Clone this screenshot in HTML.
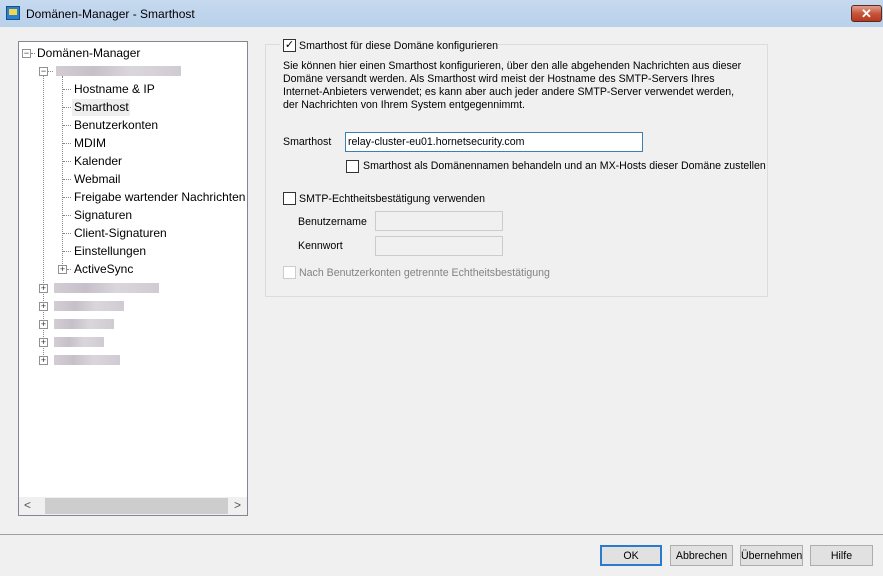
<!DOCTYPE html>
<html><head><meta charset="utf-8"><style>
*{margin:0;padding:0;box-sizing:border-box}
body{width:883px;height:576px;background:#f0f0f0;font-family:"Liberation Sans",sans-serif;font-size:10.6px;color:#000;position:relative;overflow:hidden}
.a{position:absolute;white-space:nowrap}
.title{left:0;top:0;width:883px;height:27px;background:linear-gradient(#c6d9ef,#b9d1ea);}
.close{left:851px;top:5px;width:31px;height:17px;background:linear-gradient(#e0a090,#c8553b 50%,#b6381f);border:1px solid #5a2a20;border-radius:3px;color:#fff;font-weight:bold;font-size:13px;text-align:center;line-height:15px}
.tree{left:18px;top:41px;width:230px;height:475px;background:#fff;border:1px solid #828790}
.ti{font-size:12px}
.blur{height:10px;background:linear-gradient(90deg,#c8c0c8,#b8b0bc 30%,#d0ccd2 60%,#c4bec8);opacity:.8}
.pm{width:9px;height:9px;border:1px solid #919191;background:#fff;font-size:9px;line-height:7px;text-align:center;color:#333}
.dot{border-left:1px dotted #888}
.doth{border-top:1px dotted #888;height:0}
.cb{width:13px;height:13px;border:1px solid #333;background:#fff}
.inp{background:#fff;border:1px solid #7a7a7a}
.dis{background:#f0f0f0;border:1px solid #ccc}
.btn{top:545px;height:21px;border:1px solid #adadad;background:#e1e1e1;text-align:center;line-height:20px;font-size:10.6px}
</style></head><body>
<div class="a title"></div>
<div class="a" style="left:6px;top:6px;width:14px;height:14px;background:#2b7fd0;border:1px solid #16508a"><div style="margin:2px;width:8px;height:6px;background:#f1d64a"></div></div>
<div class="a" style="left:26px;top:7px;font-size:12px">Domänen-Manager - Smarthost</div>
<div class="a close">✕</div>

<div class="a tree"></div>
<div class="a dot" style="left:43px;top:76px;height:285px"></div>
<div class="a dot" style="left:62px;top:76px;height:194px"></div>
<div class="a pm" style="left:22px;top:49px">−</div><div class="a doth" style="left:31px;top:53px;width:4px"></div>
<div class="a ti" style="left:37px;top:46px">Domänen-Manager</div>
<div class="a pm" style="left:39px;top:67px">−</div><div class="a doth" style="left:48px;top:71px;width:5px"></div>
<div class="a blur" style="left:56px;top:66px;width:125px"></div>
<div class="a doth" style="left:63px;top:89px;width:8px"></div><div class="a ti" style="left:74px;top:82px">Hostname &amp; IP</div>
<div class="a" style="left:72px;top:99px;width:58px;height:17px;background:#eee"></div>
<div class="a doth" style="left:63px;top:107px;width:8px"></div><div class="a ti" style="left:74px;top:100px">Smarthost</div>
<div class="a doth" style="left:63px;top:125px;width:8px"></div><div class="a ti" style="left:74px;top:118px">Benutzerkonten</div>
<div class="a doth" style="left:63px;top:143px;width:8px"></div><div class="a ti" style="left:74px;top:136px">MDIM</div>
<div class="a doth" style="left:63px;top:161px;width:8px"></div><div class="a ti" style="left:74px;top:154px">Kalender</div>
<div class="a doth" style="left:63px;top:179px;width:8px"></div><div class="a ti" style="left:74px;top:172px">Webmail</div>
<div class="a doth" style="left:63px;top:197px;width:8px"></div><div class="a ti" style="left:74px;top:190px">Freigabe wartender Nachrichten</div>
<div class="a doth" style="left:63px;top:215px;width:8px"></div><div class="a ti" style="left:74px;top:208px">Signaturen</div>
<div class="a doth" style="left:63px;top:233px;width:8px"></div><div class="a ti" style="left:74px;top:226px">Client-Signaturen</div>
<div class="a doth" style="left:63px;top:251px;width:8px"></div><div class="a ti" style="left:74px;top:244px">Einstellungen</div>
<div class="a pm" style="left:58px;top:265px">+</div><div class="a doth" style="left:67px;top:269px;width:4px"></div><div class="a ti" style="left:74px;top:262px">ActiveSync</div>
<div class="a pm" style="left:39px;top:284px">+</div><div class="a blur" style="left:54px;top:283px;width:105px"></div>
<div class="a pm" style="left:39px;top:302px">+</div><div class="a blur" style="left:54px;top:301px;width:70px"></div>
<div class="a pm" style="left:39px;top:320px">+</div><div class="a blur" style="left:54px;top:319px;width:60px"></div>
<div class="a pm" style="left:39px;top:338px">+</div><div class="a blur" style="left:54px;top:337px;width:50px"></div>
<div class="a pm" style="left:39px;top:356px">+</div><div class="a blur" style="left:54px;top:355px;width:66px"></div>
<div class="a" style="left:19px;top:497px;width:228px;height:18px;background:#f0f0f0"></div>
<div class="a" style="left:45px;top:498px;width:183px;height:16px;background:#cdcdcd"></div>
<div class="a" style="left:24px;top:498px;font-size:12px;color:#555">&lt;</div>
<div class="a" style="left:234px;top:498px;font-size:12px;color:#555">&gt;</div>

<div class="a" style="left:265px;top:44px;width:503px;height:253px;border:1px solid #dcdcdc"></div>
<div class="a" style="left:280px;top:37px;width:216px;height:14px;background:#f0f0f0"></div>
<div class="a cb" style="left:283px;top:39px;font-size:11px;line-height:11px;text-align:center">✓</div>
<div class="a" style="left:299px;top:40px">Smarthost für diese Domäne konfigurieren</div>
<div class="a" style="left:283px;top:60px;line-height:13px;white-space:normal;width:480px">Sie können hier einen Smarthost konfigurieren, über den alle abgehenden Nachrichten aus dieser<br>Domäne versandt werden. Als Smarthost wird meist der Hostname des SMTP-Servers Ihres<br>Internet-Anbieters verwendet; es kann aber auch jeder andere SMTP-Server verwendet werden,<br>der Nachrichten von Ihrem System entgegennimmt.</div>
<div class="a" style="left:283px;top:136px">Smarthost</div>
<div class="a inp" style="left:345px;top:132px;width:298px;height:20px;border-color:#3c7fb1"></div>
<div class="a" style="left:348px;top:136px">relay-cluster-eu01.hornetsecurity.com</div>
<div class="a cb" style="left:346px;top:160px"></div>
<div class="a" style="left:363px;top:160px">Smarthost als Domänennamen behandeln und an MX-Hosts dieser Domäne zustellen</div>
<div class="a cb" style="left:283px;top:192px"></div>
<div class="a" style="left:299px;top:193px">SMTP-Echtheitsbestätigung verwenden</div>
<div class="a" style="left:298px;top:216px">Benutzername</div>
<div class="a dis" style="left:375px;top:211px;width:128px;height:20px"></div>
<div class="a" style="left:298px;top:240px">Kennwort</div>
<div class="a dis" style="left:375px;top:236px;width:128px;height:20px"></div>
<div class="a cb" style="left:283px;top:266px;border-color:#ccc"></div>
<div class="a" style="left:299px;top:267px;color:#838383">Nach Benutzerkonten getrennte Echtheitsbestätigung</div>

<div class="a" style="left:0;top:534px;width:883px;height:1px;background:#a0a0a0"></div>
<div class="a btn" style="left:600px;width:62px;border:2px solid #2a7ad0;line-height:18px">OK</div>
<div class="a btn" style="left:670px;width:63px">Abbrechen</div>
<div class="a btn" style="left:740px;width:63px">Übernehmen</div>
<div class="a btn" style="left:810px;width:63px">Hilfe</div>
</body></html>
